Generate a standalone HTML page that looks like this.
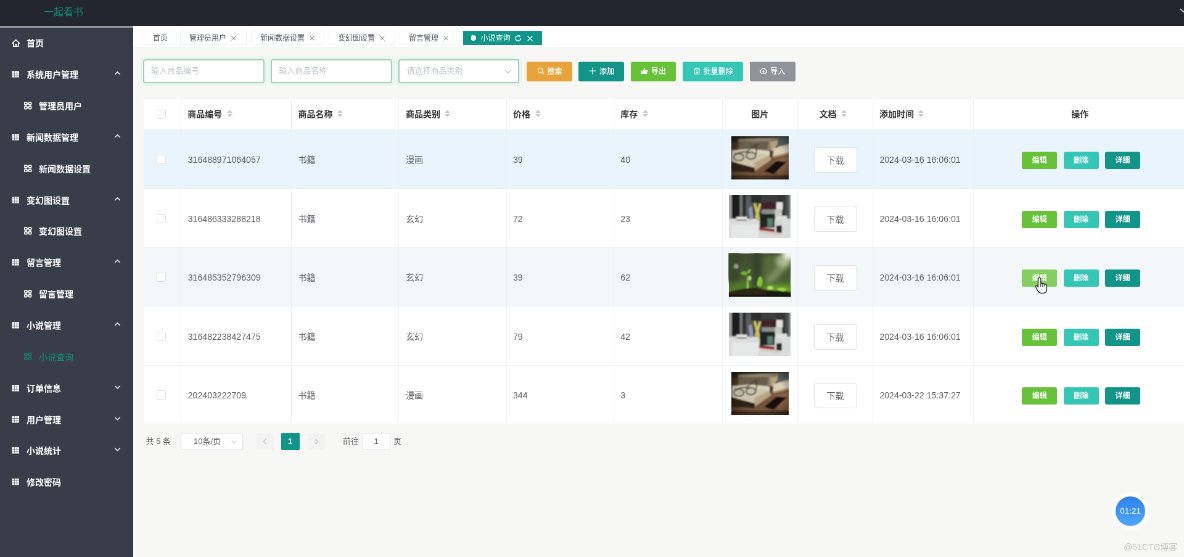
<!DOCTYPE html>
<html lang="zh-CN">
<head>
<meta charset="utf-8">
<title>一起看书</title>
<style>
*{box-sizing:border-box;margin:0;padding:0}
html,body{width:1184px;height:557px;overflow:hidden;background:#f7f7f6}
body{font-family:"Liberation Sans","Noto Sans CJK SC",sans-serif;color:#606266}
#app{position:absolute;left:0;top:0;width:1940px;height:904px;transform:scale(0.616667);transform-origin:0 0;overflow:hidden;background:#f7f7f6;font-size:14px;will-change:transform;filter:blur(0.6px)}
.abs{position:absolute}
/* header */
#hdr{left:0;top:0;width:1940px;height:42.4px;background:#23262e}
#hdr .title{left:71px;top:7.5px;font-size:16px;line-height:24px;color:#0f8f74;white-space:nowrap}
/* sidebar */
#side{left:0;top:42.4px;width:216px;height:870px;background:#393d49;border-top:3px solid #94979f}
#side .strip{left:209px;top:0;width:7px;height:870px;background:#363a45}
.mi{position:absolute;left:0;width:216px;height:51px;line-height:51px;color:#fff;font-size:14px;font-weight:700;white-space:nowrap}
.mi .ic{position:absolute;left:19px;top:18px;width:12.5px;height:12.5px}
.mi .tx{position:absolute;left:43px;top:0}
.mi.sub .ic{left:39px}
.mi.sub .tx{left:63px}
.mi .ar{position:absolute;left:184.5px;top:17px;width:11px;height:11px}
.mi.act{color:#12917c;font-weight:400}
/* tabs */
#tabs{left:216px;top:42.4px;width:1730px;height:35.8px;background:#fff;border-bottom:1px solid #eceeef}
.tab{position:absolute;top:7.3px;height:23.4px;line-height:23.4px;border:1px solid #eef0f3;background:#fff;color:#495060;font-size:12px;white-space:nowrap;text-align:left;padding-left:14px}
.tab .x{display:inline-block;margin-left:7px;width:10px;height:10px;vertical-align:-1px}
.tab.on{background:#0f9688;border-color:#0f9688;color:#fff}
/* search */
.inp{position:absolute;top:96px;height:39px;border:2px solid #a3d0bd;border-radius:4px;background:#fff;box-shadow:0 0 0 4px rgba(130,230,190,.12);font-size:13px;line-height:33px;color:#c3c6cd;padding-left:11px;white-space:nowrap}
.btn{position:absolute;top:100px;height:32px;border-radius:3px;color:#fff;font-size:12px;line-height:32px;text-align:center;white-space:nowrap;font-weight:500}
/* table */
#tbl{left:233px;top:160.6px;width:1707px;height:527.9px;background:#fff}
.row{position:absolute;left:0;width:1707px;height:95.5px;border-bottom:1px solid #ebeef5}
.hrow{position:absolute;left:0;top:0;width:1707px;height:50.4px;border-bottom:1px solid #ebeef5}
.vl{position:absolute;top:0;width:1px;height:527.9px;background:#eef0f5}
.c{position:absolute;white-space:nowrap;font-size:14.15px;line-height:20px;color:#606266}
.h{position:absolute;white-space:nowrap;font-size:14px;line-height:20px;color:#333;font-weight:700;top:14.2px}
.cb{position:absolute;left:20.5px;width:15px;height:15px;border:1px solid #dcdfe6;border-radius:2px;background:#fff}
.dl{position:absolute;left:1087px;top:28.4px;width:70px;height:41px;border:1px solid #dcdfe6;border-radius:4px;background:#fff;color:#606266;font-size:14px;line-height:40px;text-align:center}
.ob{position:absolute;top:35.2px;width:57px;height:28px;border-radius:3px;color:#fff;font-size:12px;line-height:28px;text-align:center;font-weight:700}
.img{position:absolute;overflow:hidden}
/* pagination */
.pg{position:absolute;font-size:13px;color:#606266;line-height:28px;white-space:nowrap}
</style>
</head>
<body>
<div id="app">
<div id="hdr" class="abs"><div class="title abs">一起看书</div>
<svg class="abs" style="left:1913px;top:13px" width="12" height="9" viewBox="0 0 14 10"><path d="M1 1 L7 7 L13 1" fill="none" stroke="#b9bbc0" stroke-width="2"/></svg>
</div>
<div id="side" class="abs"><div class="strip abs"></div>
<div class="mi" style="top:0.0px"><svg class="ic" style="width:13.5px;height:13.5px;top:17.5px;left:18.5px" viewBox="0 0 12 12"><path d="M0.8 6.3 L6 1.3 L11.2 6.3 M2.5 5.2 V10.9 H9.5 V5.2 M5 10.9 V8.2 H7 V10.9" fill="none" stroke="#fff" stroke-width="1.35" stroke-linejoin="round" stroke-linecap="round"/></svg><span class="tx">首页</span></div>
<div class="mi" style="top:50.8px"><svg class="ic" viewBox="0 0 12 12"><path d="M0.5 1h11v10h-11z M0.5 4.2h11 M0.5 7.6h11 M4.2 1v10 M7.8 1v10" fill="#fff" stroke="#393d49" stroke-width="0"/><path d="M0.5 4.3h11 M0.5 7.7h11 M4.2 1v10 M7.9 1v10" stroke="#393d49" stroke-width="0.55" fill="none"/></svg><span class="tx">系统用户管理</span><svg class="ar" viewBox="0 0 12 12"><path d="M1.5 8.5 L6 4 L10.5 8.5" fill="none" stroke="#fff" stroke-width="1.6"/></svg></div>
<div class="mi sub" style="top:101.7px"><svg class="ic" viewBox="0 0 12 12"><g fill="none" stroke="#fff" stroke-width="1.7"><rect x="0.8" y="0.8" width="4" height="4" rx="1.2"/><rect x="7.2" y="0.8" width="4" height="4" rx="1.2"/><rect x="0.8" y="7.2" width="4" height="4" rx="1.2"/><rect x="7.2" y="7.2" width="4" height="4" rx="1.2"/></g></svg><span class="tx">管理员用户</span></div>
<div class="mi" style="top:152.5px"><svg class="ic" viewBox="0 0 12 12"><path d="M0.5 1h11v10h-11z M0.5 4.2h11 M0.5 7.6h11 M4.2 1v10 M7.8 1v10" fill="#fff" stroke="#393d49" stroke-width="0"/><path d="M0.5 4.3h11 M0.5 7.7h11 M4.2 1v10 M7.9 1v10" stroke="#393d49" stroke-width="0.55" fill="none"/></svg><span class="tx">新闻数据管理</span><svg class="ar" viewBox="0 0 12 12"><path d="M1.5 8.5 L6 4 L10.5 8.5" fill="none" stroke="#fff" stroke-width="1.6"/></svg></div>
<div class="mi sub" style="top:203.4px"><svg class="ic" viewBox="0 0 12 12"><g fill="none" stroke="#fff" stroke-width="1.7"><rect x="0.8" y="0.8" width="4" height="4" rx="1.2"/><rect x="7.2" y="0.8" width="4" height="4" rx="1.2"/><rect x="0.8" y="7.2" width="4" height="4" rx="1.2"/><rect x="7.2" y="7.2" width="4" height="4" rx="1.2"/></g></svg><span class="tx">新闻数据设置</span></div>
<div class="mi" style="top:254.2px"><svg class="ic" viewBox="0 0 12 12"><path d="M0.5 1h11v10h-11z M0.5 4.2h11 M0.5 7.6h11 M4.2 1v10 M7.8 1v10" fill="#fff" stroke="#393d49" stroke-width="0"/><path d="M0.5 4.3h11 M0.5 7.7h11 M4.2 1v10 M7.9 1v10" stroke="#393d49" stroke-width="0.55" fill="none"/></svg><span class="tx">变幻图设置</span><svg class="ar" viewBox="0 0 12 12"><path d="M1.5 8.5 L6 4 L10.5 8.5" fill="none" stroke="#fff" stroke-width="1.6"/></svg></div>
<div class="mi sub" style="top:305.1px"><svg class="ic" viewBox="0 0 12 12"><g fill="none" stroke="#fff" stroke-width="1.7"><rect x="0.8" y="0.8" width="4" height="4" rx="1.2"/><rect x="7.2" y="0.8" width="4" height="4" rx="1.2"/><rect x="0.8" y="7.2" width="4" height="4" rx="1.2"/><rect x="7.2" y="7.2" width="4" height="4" rx="1.2"/></g></svg><span class="tx">变幻图设置</span></div>
<div class="mi" style="top:356.0px"><svg class="ic" viewBox="0 0 12 12"><path d="M0.5 1h11v10h-11z M0.5 4.2h11 M0.5 7.6h11 M4.2 1v10 M7.8 1v10" fill="#fff" stroke="#393d49" stroke-width="0"/><path d="M0.5 4.3h11 M0.5 7.7h11 M4.2 1v10 M7.9 1v10" stroke="#393d49" stroke-width="0.55" fill="none"/></svg><span class="tx">留言管理</span><svg class="ar" viewBox="0 0 12 12"><path d="M1.5 8.5 L6 4 L10.5 8.5" fill="none" stroke="#fff" stroke-width="1.6"/></svg></div>
<div class="mi sub" style="top:406.8px"><svg class="ic" viewBox="0 0 12 12"><g fill="none" stroke="#fff" stroke-width="1.7"><rect x="0.8" y="0.8" width="4" height="4" rx="1.2"/><rect x="7.2" y="0.8" width="4" height="4" rx="1.2"/><rect x="0.8" y="7.2" width="4" height="4" rx="1.2"/><rect x="7.2" y="7.2" width="4" height="4" rx="1.2"/></g></svg><span class="tx">留言管理</span></div>
<div class="mi" style="top:457.7px"><svg class="ic" viewBox="0 0 12 12"><path d="M0.5 1h11v10h-11z M0.5 4.2h11 M0.5 7.6h11 M4.2 1v10 M7.8 1v10" fill="#fff" stroke="#393d49" stroke-width="0"/><path d="M0.5 4.3h11 M0.5 7.7h11 M4.2 1v10 M7.9 1v10" stroke="#393d49" stroke-width="0.55" fill="none"/></svg><span class="tx">小说管理</span><svg class="ar" viewBox="0 0 12 12"><path d="M1.5 8.5 L6 4 L10.5 8.5" fill="none" stroke="#fff" stroke-width="1.6"/></svg></div>
<div class="mi sub act" style="top:508.5px"><svg class="ic" viewBox="0 0 12 12"><g fill="none" stroke="#12917c" stroke-width="1.2"><rect x="0.8" y="0.8" width="4" height="4" rx="1.2"/><rect x="7.2" y="0.8" width="4" height="4" rx="1.2"/><rect x="0.8" y="7.2" width="4" height="4" rx="1.2"/><rect x="7.2" y="7.2" width="4" height="4" rx="1.2"/></g></svg><span class="tx">小说查询</span></div>
<div class="mi" style="top:559.4px"><svg class="ic" viewBox="0 0 12 12"><path d="M0.5 1h11v10h-11z M0.5 4.2h11 M0.5 7.6h11 M4.2 1v10 M7.8 1v10" fill="#fff" stroke="#393d49" stroke-width="0"/><path d="M0.5 4.3h11 M0.5 7.7h11 M4.2 1v10 M7.9 1v10" stroke="#393d49" stroke-width="0.55" fill="none"/></svg><span class="tx">订单信息</span><svg class="ar" viewBox="0 0 12 12"><path d="M1.5 4 L6 8.5 L10.5 4" fill="none" stroke="#fff" stroke-width="1.6"/></svg></div>
<div class="mi" style="top:610.2px"><svg class="ic" viewBox="0 0 12 12"><path d="M0.5 1h11v10h-11z M0.5 4.2h11 M0.5 7.6h11 M4.2 1v10 M7.8 1v10" fill="#fff" stroke="#393d49" stroke-width="0"/><path d="M0.5 4.3h11 M0.5 7.7h11 M4.2 1v10 M7.9 1v10" stroke="#393d49" stroke-width="0.55" fill="none"/></svg><span class="tx">用户管理</span><svg class="ar" viewBox="0 0 12 12"><path d="M1.5 4 L6 8.5 L10.5 4" fill="none" stroke="#fff" stroke-width="1.6"/></svg></div>
<div class="mi" style="top:661.1px"><svg class="ic" viewBox="0 0 12 12"><path d="M0.5 1h11v10h-11z M0.5 4.2h11 M0.5 7.6h11 M4.2 1v10 M7.8 1v10" fill="#fff" stroke="#393d49" stroke-width="0"/><path d="M0.5 4.3h11 M0.5 7.7h11 M4.2 1v10 M7.9 1v10" stroke="#393d49" stroke-width="0.55" fill="none"/></svg><span class="tx">小说统计</span><svg class="ar" viewBox="0 0 12 12"><path d="M1.5 4 L6 8.5 L10.5 4" fill="none" stroke="#fff" stroke-width="1.6"/></svg></div>
<div class="mi" style="top:711.9px"><svg class="ic" viewBox="0 0 12 12"><path d="M0.5 1h11v10h-11z M0.5 4.2h11 M0.5 7.6h11 M4.2 1v10 M7.8 1v10" fill="#fff" stroke="#393d49" stroke-width="0"/><path d="M0.5 4.3h11 M0.5 7.7h11 M4.2 1v10 M7.9 1v10" stroke="#393d49" stroke-width="0.55" fill="none"/></svg><span class="tx">修改密码</span></div>
</div>
<div id="tabs" class="abs">
<div class="tab" style="left:16.7px;width:53.7px">首页</div>
<div class="tab" style="left:75.9px;width:107.8px">管理员用户<svg class="x" viewBox="0 0 10 10"><path d="M1.5 1.5 L8.5 8.5 M8.5 1.5 L1.5 8.5" stroke="#6a6f78" stroke-width="1" fill="none"/></svg></div>
<div class="tab" style="left:191.0px;width:118.9px">新闻数据设置<svg class="x" viewBox="0 0 10 10"><path d="M1.5 1.5 L8.5 8.5 M8.5 1.5 L1.5 8.5" stroke="#6a6f78" stroke-width="1" fill="none"/></svg></div>
<div class="tab" style="left:316.9px;width:108.0px">变幻图设置<svg class="x" viewBox="0 0 10 10"><path d="M1.5 1.5 L8.5 8.5 M8.5 1.5 L1.5 8.5" stroke="#6a6f78" stroke-width="1" fill="none"/></svg></div>
<div class="tab" style="left:432.0px;width:91.5px">留言管理<svg class="x" viewBox="0 0 10 10"><path d="M1.5 1.5 L8.5 8.5 M8.5 1.5 L1.5 8.5" stroke="#6a6f78" stroke-width="1" fill="none"/></svg></div>
<div class="tab on" style="left:534.5px;width:128.7px;padding-left:28px"><span style="position:absolute;left:11.5px;top:6.5px;width:9px;height:9px;border-radius:50%;background:#fff"></span>小说查询<svg style="position:absolute;left:82.5px;top:5px" width="12.5" height="12.5" viewBox="0 0 12 12"><path d="M10 6 A4 4 0 1 1 8.2 2.6" fill="none" stroke="#fff" stroke-width="1.4"/><path d="M7.2 0.8 L10.2 2.6 L7.4 4.4z" fill="#fff"/></svg><svg style="position:absolute;left:102.5px;top:6px" width="11" height="11" viewBox="0 0 10 10"><path d="M1.5 1.5 L8.5 8.5 M8.5 1.5 L1.5 8.5" stroke="#fff" stroke-width="1.3" fill="none"/></svg></div>
</div>
<div class="inp" style="left:231.9px;width:197.0px">输入商品编号</div>
<div class="inp" style="left:439.3px;width:197.2px">输入商品名称</div>
<div class="inp" style="left:646.4px;width:196.0px">请选择商品类别<svg style="position:absolute;right:9px;top:11px" width="14" height="14" viewBox="0 0 14 14"><path d="M2 4.5 L7 9.5 L12 4.5" fill="none" stroke="#c0c4cc" stroke-width="1.3"/></svg></div>
<div class="btn" style="left:854.1px;width:74.0px;background:#e8a33d"><svg width="12" height="12" viewBox="0 0 12 12" style="vertical-align:-1px;margin-right:5px"><circle cx="5.2" cy="5.2" r="3.8" fill="none" stroke="#fff" stroke-width="1.3"/><path d="M8 8 L11 11" stroke="#fff" stroke-width="1.3"/></svg>搜索</div>
<div class="btn" style="left:938.4px;width:74.0px;background:#139488"><svg width="12" height="12" viewBox="0 0 12 12" style="vertical-align:-1px;margin-right:5px"><path d="M6 0.5 V11.5 M0.5 6 H11.5" stroke="#fff" stroke-width="1.2"/></svg>添加</div>
<div class="btn" style="left:1022.8px;width:73.4px;background:#67c23a"><svg width="12" height="12" viewBox="0 0 12 12" style="vertical-align:-1px;margin-right:5px"><path d="M0.5 5.5h2.5v5.5h-2.5z M3.8 5.2 L5.8 1 Q7.6 1 7 3.2 L6.8 4.4 H10.4 Q11.8 4.6 11.2 6.2 L10 10.2 Q9.6 11 8.6 11 H3.8z" fill="#fff"/></svg>导出</div>
<div class="btn" style="left:1107.2px;width:98.0px;background:#36c6b5"><svg width="12" height="12" viewBox="0 0 12 12" style="vertical-align:-1px;margin-right:5px"><path d="M1 3 H11 M4 3 V1.2 H8 V3 M2.2 3 V11 H9.8 V3 M4.2 6h3.6 M4.2 8.4h3.6" fill="none" stroke="#fff" stroke-width="1.1"/></svg>批量删除</div>
<div class="btn" style="left:1215.7px;width:74.0px;background:#909399"><svg width="12" height="12" viewBox="0 0 12 12" style="vertical-align:-1px;margin-right:5px"><path d="M3.2 10 A3 3 0 0 1 2.6 4.4 A3.6 3.6 0 0 1 9.4 4.4 A3 3 0 0 1 8.8 10 Z" fill="none" stroke="#fff" stroke-width="1.3"/><path d="M6 9.2 V5.6 M4.4 7 L6 5.4 L7.6 7" fill="none" stroke="#fff" stroke-width="1.1"/></svg>导入</div>
<div id="tbl" class="abs">
<div class="hrow">
<div class="cb" style="top:17px"></div>
<div class="h" style="left:71.2px">商品编号<svg style="position:absolute;top:1.5px;margin-left:6.5px" width="11" height="16" viewBox="0 0 10 16" preserveAspectRatio="none"><path d="M5 2 L9 7 H1z M5 14 L9 9 H1z" fill="#c6cad2"/></svg></div>
<div class="h" style="left:250.4px">商品名称<svg style="position:absolute;top:1.5px;margin-left:6.5px" width="11" height="16" viewBox="0 0 10 16" preserveAspectRatio="none"><path d="M5 2 L9 7 H1z M5 14 L9 9 H1z" fill="#c6cad2"/></svg></div>
<div class="h" style="left:424.9px">商品类别<svg style="position:absolute;top:1.5px;margin-left:6.5px" width="11" height="16" viewBox="0 0 10 16" preserveAspectRatio="none"><path d="M5 2 L9 7 H1z M5 14 L9 9 H1z" fill="#c6cad2"/></svg></div>
<div class="h" style="left:599.0px">价格<svg style="position:absolute;top:1.5px;margin-left:6.5px" width="11" height="16" viewBox="0 0 10 16" preserveAspectRatio="none"><path d="M5 2 L9 7 H1z M5 14 L9 9 H1z" fill="#c6cad2"/></svg></div>
<div class="h" style="left:773.3px">库存<svg style="position:absolute;top:1.5px;margin-left:6.5px" width="11" height="16" viewBox="0 0 10 16" preserveAspectRatio="none"><path d="M5 2 L9 7 H1z M5 14 L9 9 H1z" fill="#c6cad2"/></svg></div>
<div class="h" style="left:938.3px;width:121.90000000000009px;text-align:center">图片</div>
<div class="h" style="left:1060.2px;width:121.70000000000005px;text-align:center;padding-right:23px">文档<svg style="position:absolute;top:1.5px;margin-left:6.5px" width="11" height="16" viewBox="0 0 10 16" preserveAspectRatio="none"><path d="M5 2 L9 7 H1z M5 14 L9 9 H1z" fill="#c6cad2"/></svg></div>
<div class="h" style="left:1192.9px">添加时间<svg style="position:absolute;top:1.5px;margin-left:6.5px" width="11" height="16" viewBox="0 0 10 16" preserveAspectRatio="none"><path d="M5 2 L9 7 H1z M5 14 L9 9 H1z" fill="#c6cad2"/></svg></div>
<div class="h" style="left:1344.8px;width:347.10000000000014px;text-align:center">操作</div>
</div>
<div class="row" style="top:50.4px;background:#e9f4fd">
<div class="cb" style="top:40.5px"></div>
<div class="c" style="left:71.7px;top:38.4px">316488971064057</div>
<div class="c" style="left:250.4px;top:38.4px">书籍</div>
<div class="c" style="left:424.9px;top:38.4px">漫画</div>
<div class="c" style="left:599.0px;top:38.4px">39</div>
<div class="c" style="left:773.3px;top:38.4px">40</div>
<svg class="img" style="left:952.6px;top:9.6px" width="93.6" height="70.2" viewBox="35 40 643 482" preserveAspectRatio="none">
<defs>
<filter id="bA0" x="-5%" y="-5%" width="110%" height="110%"><feGaussianBlur stdDeviation="7"/></filter>
<radialGradient id="vA0" cx="0.5" cy="0.5" r="0.75"><stop offset="0.55" stop-color="#000" stop-opacity="0"/><stop offset="1" stop-color="#000" stop-opacity=".62"/></radialGradient>
<clipPath id="cA0"><rect x="35" y="40" width="643" height="482"/></clipPath>
</defs>
<g clip-path="url(#cA0)">
<rect x="35" y="40" width="643" height="482" fill="#4b3826"/>
<g filter="url(#bA0)">
<rect x="20" y="30" width="680" height="70" fill="#33271b"/>
<path d="M300 330 L470 240 L700 200 L700 540 L20 540 L20 440 L290 440z" fill="#75523a"/>
<path d="M520 300 L700 260 L700 470 L560 500z" fill="#8a6045"/>
<path d="M110 70 L600 52 L470 200 L120 185z" fill="#8f846e"/>
<path d="M120 100 L450 95 L440 190 L110 185z" fill="#6a5f4d"/>
<path d="M470 110 L610 55 L520 170 L480 215z" fill="#b7a37f"/>
<path d="M560 45 L700 40 L700 130 L545 165z" fill="#5b6867"/>
<path d="M500 175 L700 120 L700 215 L500 268z" fill="#d8cfb6"/>
<path d="M500 262 L700 210 L700 232 L505 282z" fill="#a48a68"/>
<path d="M40 195 L250 180 L462 205 L472 285 L290 395 L40 320z" fill="#cdc4ac"/>
<path d="M250 185 L460 205 L468 250 L330 225z" fill="#ddd5bf"/>
<path d="M290 335 L472 245 L474 305 L300 425z" fill="#b8a582"/>
<path d="M462 190 Q500 215 478 275 L462 270z" fill="#3c2c1e"/>
<path d="M30 320 L292 390 L292 445 L30 420z" fill="#2e2217"/>
<path d="M400 430 L540 315 L652 326 L505 462z" fill="#120e0b"/>
<rect x="20" y="475" width="680" height="60" fill="#4a3423"/>
<ellipse cx="118" cy="272" rx="52" ry="38" fill="#bfbaa6"/>
<ellipse cx="252" cy="256" rx="50" ry="36" fill="#c6c1ae"/>
</g>
<g fill="none" stroke="#3a342a" stroke-width="10" filter="url(#bA0)" opacity=".9">
<ellipse cx="118" cy="272" rx="56" ry="40"/>
<ellipse cx="252" cy="256" rx="54" ry="38"/>
<path d="M70 240 Q150 205 235 215 M305 250 Q330 180 300 130 M200 225 Q260 140 340 130"/>
</g>
<rect x="35" y="40" width="643" height="482" fill="url(#vA0)"/>
</g>
</svg>

<div class="dl" style="left:1086.5px">下载</div>
<div class="c" style="left:1193.4px;top:38.4px">2024-03-16 16:06:01</div>
<div class="ob" style="left:1424.3px;background:#67c23a">编辑</div>
<div class="ob" style="left:1491.6px;background:#36c6b5">删除</div>
<div class="ob" style="left:1558.9px;background:#139488">详细</div>
</div>
<div class="row" style="top:145.9px;background:#fff">
<div class="cb" style="top:40.5px"></div>
<div class="c" style="left:71.7px;top:38.4px">316486333288218</div>
<div class="c" style="left:250.4px;top:38.4px">书籍</div>
<div class="c" style="left:424.9px;top:38.4px">玄幻</div>
<div class="c" style="left:599.0px;top:38.4px">72</div>
<div class="c" style="left:773.3px;top:38.4px">23</div>
<svg class="img" style="left:949.3px;top:9.1px" width="100.2" height="70.2" viewBox="12 38 688 482" preserveAspectRatio="none">
<defs>
<filter id="bB1" x="-5%" y="-5%" width="110%" height="110%"><feGaussianBlur stdDeviation="6"/></filter>
<clipPath id="cB1"><rect x="12" y="38" width="688" height="482"/></clipPath>
</defs>
<g clip-path="url(#cB1)">
<rect x="12" y="38" width="688" height="482" fill="#dcdfde"/>
<g filter="url(#bB1)">
<rect x="0" y="20" width="720" height="285" fill="#4d4e50"/>
<rect x="0" y="20" width="45" height="290" fill="#a2a3a4"/>
<rect x="45" y="20" width="88" height="275" fill="#1b1c1e"/>
<rect x="133" y="20" width="30" height="280" fill="#737475"/>
<rect x="163" y="20" width="40" height="270" fill="#2e2f31"/>
<rect x="203" y="60" width="55" height="240" fill="#5a5b5d"/>
<rect x="258" y="20" width="115" height="110" fill="#2c2d2f"/>
<rect x="373" y="20" width="170" height="100" fill="#3b3c3e"/>
<rect x="545" y="20" width="95" height="260" fill="#343537"/>
<rect x="640" y="20" width="40" height="280" fill="#4a4b4d"/>
<rect x="680" y="20" width="30" height="290" fill="#8b8c8d"/>
<rect x="0" y="305" width="720" height="230" fill="#d9dcdb"/>
<rect x="40" y="370" width="300" height="160" fill="#e6e8e7"/>
<rect x="95" y="282" width="118" height="30" fill="#ebebe9"/>
<rect x="98" y="312" width="112" height="16" fill="#6c6460"/>
<rect x="100" y="328" width="112" height="38" fill="#e0e0de"/>
<path d="M232 190 L266 160 L286 300 L246 318z" fill="#9298ae"/>
<path d="M284 132 L312 130 L366 322 L336 330z" fill="#c9c052"/>
<path d="M348 135 L372 140 L326 300 L300 296z" fill="#cfc862"/>
<rect x="372" y="118" width="170" height="84" fill="#40222a"/>
<rect x="380" y="200" width="150" height="52" fill="#8a8f8f"/>
<rect x="355" y="250" width="168" height="152" fill="#1b2521"/>
<rect x="440" y="300" width="62" height="92" fill="#5d7b72"/>
<rect x="540" y="120" width="72" height="82" fill="#e3e3e1"/>
<rect x="525" y="200" width="78" height="75" fill="#c6c8c6"/>
<rect x="530" y="272" width="130" height="58" fill="#dfe0de"/>
<rect x="522" y="330" width="72" height="60" fill="#d2d4d2"/>
<path d="M350 398 L522 418 L522 452 L350 432z" fill="#8c2d2b"/>
<path d="M356 434 L585 462 L580 492 L360 462z" fill="#d8c7be"/>
<path d="M540 382 L602 378 L600 462 L540 456z" fill="#29292a"/>
</g>
</g>
</svg>

<div class="dl" style="left:1086.5px">下载</div>
<div class="c" style="left:1193.4px;top:38.4px">2024-03-16 16:06:01</div>
<div class="ob" style="left:1424.3px;background:#67c23a">编辑</div>
<div class="ob" style="left:1491.6px;background:#36c6b5">删除</div>
<div class="ob" style="left:1558.9px;background:#139488">详细</div>
</div>
<div class="row" style="top:241.4px;background:#f4f7f9">
<div class="cb" style="top:40.5px"></div>
<div class="c" style="left:71.7px;top:38.4px">316485352796309</div>
<div class="c" style="left:250.4px;top:38.4px">书籍</div>
<div class="c" style="left:424.9px;top:38.4px">玄幻</div>
<div class="c" style="left:599.0px;top:38.4px">39</div>
<div class="c" style="left:773.3px;top:38.4px">62</div>
<svg class="img" style="left:949.3px;top:9.1px" width="100.2" height="70.2" viewBox="12 38 688 482" preserveAspectRatio="none">
<defs>
<filter id="bC2" x="-5%" y="-5%" width="110%" height="110%"><feGaussianBlur stdDeviation="9"/></filter>
<filter id="bD2" x="-20%" y="-20%" width="140%" height="140%"><feGaussianBlur stdDeviation="22"/></filter>
<linearGradient id="gC2" x1="0" y1="0" x2="0" y2="1"><stop offset="0" stop-color="#3f4c2d"/><stop offset=".55" stop-color="#485c32"/><stop offset=".85" stop-color="#55782c"/><stop offset="1" stop-color="#3f5a22"/></linearGradient>
<clipPath id="cC2"><rect x="12" y="38" width="688" height="482"/></clipPath>
</defs>
<g clip-path="url(#cC2)">
<rect x="12" y="38" width="688" height="482" fill="url(#gC2)"/>
<g filter="url(#bD2)">
<rect x="0" y="20" width="130" height="330" fill="#3b482b"/>
<rect x="275" y="20" width="90" height="400" fill="#38432d"/>
<rect x="400" y="60" width="160" height="300" fill="#566a3c"/>
<path d="M700 20 L720 160 L470 380 L420 340z" fill="#98aa78" opacity=".6"/>
<circle cx="672" cy="48" r="66" fill="#f6f7ea"/>
<circle cx="610" cy="120" r="70" fill="#cdd7ae" opacity=".7"/>
<rect x="80" y="370" width="170" height="80" fill="#4f7c2a"/>
<rect x="410" y="395" width="300" height="80" fill="#6fa432"/>
</g>
<g filter="url(#bC2)">
<circle cx="92" cy="182" r="28" fill="#939a80"/>
<path d="M210 430 L214 290 L228 290 L232 430z" fill="#a6cf5e"/>
<path d="M140 262 Q170 210 222 258 Q200 305 140 262z" fill="#74b430"/>
<path d="M212 262 Q222 205 256 215 Q252 265 212 262z" fill="#80c038"/>
<ellipse cx="246" cy="312" rx="16" ry="26" fill="#bfe08e"/>
<path d="M325 400 Q318 310 362 288 Q410 330 372 412z" fill="#82c636"/>
<ellipse cx="472" cy="420" rx="34" ry="20" fill="#b9e262"/>
<ellipse cx="600" cy="438" rx="50" ry="18" fill="#a0d848"/>
<path d="M0 470 Q100 446 190 432 Q290 404 400 440 Q560 466 720 472 L720 540 L0 540z" fill="#2b2519"/>
<path d="M420 470 Q470 440 520 462 Q570 440 610 466 Q650 452 690 480 L690 510 L420 510z" fill="#191b10"/>
<rect x="0" y="498" width="720" height="40" fill="#17150d"/>
</g>
</g>
</svg>

<div class="dl" style="left:1086.5px">下载</div>
<div class="c" style="left:1193.4px;top:38.4px">2024-03-16 16:06:01</div>
<div class="ob" style="left:1424.3px;background:#85ce61">编辑</div>
<div class="ob" style="left:1491.6px;background:#36c6b5">删除</div>
<div class="ob" style="left:1558.9px;background:#139488">详细</div>
</div>
<div class="row" style="top:336.9px;background:#fff">
<div class="cb" style="top:40.5px"></div>
<div class="c" style="left:71.7px;top:38.4px">316482238427475</div>
<div class="c" style="left:250.4px;top:38.4px">书籍</div>
<div class="c" style="left:424.9px;top:38.4px">玄幻</div>
<div class="c" style="left:599.0px;top:38.4px">79</div>
<div class="c" style="left:773.3px;top:38.4px">42</div>
<svg class="img" style="left:949.3px;top:9.1px" width="100.2" height="70.2" viewBox="12 38 688 482" preserveAspectRatio="none">
<defs>
<filter id="bB3" x="-5%" y="-5%" width="110%" height="110%"><feGaussianBlur stdDeviation="6"/></filter>
<clipPath id="cB3"><rect x="12" y="38" width="688" height="482"/></clipPath>
</defs>
<g clip-path="url(#cB3)">
<rect x="12" y="38" width="688" height="482" fill="#dcdfde"/>
<g filter="url(#bB3)">
<rect x="0" y="20" width="720" height="285" fill="#4d4e50"/>
<rect x="0" y="20" width="45" height="290" fill="#a2a3a4"/>
<rect x="45" y="20" width="88" height="275" fill="#1b1c1e"/>
<rect x="133" y="20" width="30" height="280" fill="#737475"/>
<rect x="163" y="20" width="40" height="270" fill="#2e2f31"/>
<rect x="203" y="60" width="55" height="240" fill="#5a5b5d"/>
<rect x="258" y="20" width="115" height="110" fill="#2c2d2f"/>
<rect x="373" y="20" width="170" height="100" fill="#3b3c3e"/>
<rect x="545" y="20" width="95" height="260" fill="#343537"/>
<rect x="640" y="20" width="40" height="280" fill="#4a4b4d"/>
<rect x="680" y="20" width="30" height="290" fill="#8b8c8d"/>
<rect x="0" y="305" width="720" height="230" fill="#d9dcdb"/>
<rect x="40" y="370" width="300" height="160" fill="#e6e8e7"/>
<rect x="95" y="282" width="118" height="30" fill="#ebebe9"/>
<rect x="98" y="312" width="112" height="16" fill="#6c6460"/>
<rect x="100" y="328" width="112" height="38" fill="#e0e0de"/>
<path d="M232 190 L266 160 L286 300 L246 318z" fill="#9298ae"/>
<path d="M284 132 L312 130 L366 322 L336 330z" fill="#c9c052"/>
<path d="M348 135 L372 140 L326 300 L300 296z" fill="#cfc862"/>
<rect x="372" y="118" width="170" height="84" fill="#40222a"/>
<rect x="380" y="200" width="150" height="52" fill="#8a8f8f"/>
<rect x="355" y="250" width="168" height="152" fill="#1b2521"/>
<rect x="440" y="300" width="62" height="92" fill="#5d7b72"/>
<rect x="540" y="120" width="72" height="82" fill="#e3e3e1"/>
<rect x="525" y="200" width="78" height="75" fill="#c6c8c6"/>
<rect x="530" y="272" width="130" height="58" fill="#dfe0de"/>
<rect x="522" y="330" width="72" height="60" fill="#d2d4d2"/>
<path d="M350 398 L522 418 L522 452 L350 432z" fill="#8c2d2b"/>
<path d="M356 434 L585 462 L580 492 L360 462z" fill="#d8c7be"/>
<path d="M540 382 L602 378 L600 462 L540 456z" fill="#29292a"/>
</g>
</g>
</svg>

<div class="dl" style="left:1086.5px">下载</div>
<div class="c" style="left:1193.4px;top:38.4px">2024-03-16 16:06:01</div>
<div class="ob" style="left:1424.3px;background:#67c23a">编辑</div>
<div class="ob" style="left:1491.6px;background:#36c6b5">删除</div>
<div class="ob" style="left:1558.9px;background:#139488">详细</div>
</div>
<div class="row" style="top:432.4px;background:#fff">
<div class="cb" style="top:40.5px"></div>
<div class="c" style="left:71.7px;top:38.4px">202403222709</div>
<div class="c" style="left:250.4px;top:38.4px">书籍</div>
<div class="c" style="left:424.9px;top:38.4px">漫画</div>
<div class="c" style="left:599.0px;top:38.4px">344</div>
<div class="c" style="left:773.3px;top:38.4px">3</div>
<svg class="img" style="left:952.6px;top:9.6px" width="93.6" height="70.2" viewBox="35 40 643 482" preserveAspectRatio="none">
<defs>
<filter id="bA4" x="-5%" y="-5%" width="110%" height="110%"><feGaussianBlur stdDeviation="7"/></filter>
<radialGradient id="vA4" cx="0.5" cy="0.5" r="0.75"><stop offset="0.55" stop-color="#000" stop-opacity="0"/><stop offset="1" stop-color="#000" stop-opacity=".62"/></radialGradient>
<clipPath id="cA4"><rect x="35" y="40" width="643" height="482"/></clipPath>
</defs>
<g clip-path="url(#cA4)">
<rect x="35" y="40" width="643" height="482" fill="#4b3826"/>
<g filter="url(#bA4)">
<rect x="20" y="30" width="680" height="70" fill="#33271b"/>
<path d="M300 330 L470 240 L700 200 L700 540 L20 540 L20 440 L290 440z" fill="#75523a"/>
<path d="M520 300 L700 260 L700 470 L560 500z" fill="#8a6045"/>
<path d="M110 70 L600 52 L470 200 L120 185z" fill="#8f846e"/>
<path d="M120 100 L450 95 L440 190 L110 185z" fill="#6a5f4d"/>
<path d="M470 110 L610 55 L520 170 L480 215z" fill="#b7a37f"/>
<path d="M560 45 L700 40 L700 130 L545 165z" fill="#5b6867"/>
<path d="M500 175 L700 120 L700 215 L500 268z" fill="#d8cfb6"/>
<path d="M500 262 L700 210 L700 232 L505 282z" fill="#a48a68"/>
<path d="M40 195 L250 180 L462 205 L472 285 L290 395 L40 320z" fill="#cdc4ac"/>
<path d="M250 185 L460 205 L468 250 L330 225z" fill="#ddd5bf"/>
<path d="M290 335 L472 245 L474 305 L300 425z" fill="#b8a582"/>
<path d="M462 190 Q500 215 478 275 L462 270z" fill="#3c2c1e"/>
<path d="M30 320 L292 390 L292 445 L30 420z" fill="#2e2217"/>
<path d="M400 430 L540 315 L652 326 L505 462z" fill="#120e0b"/>
<rect x="20" y="475" width="680" height="60" fill="#4a3423"/>
<ellipse cx="118" cy="272" rx="52" ry="38" fill="#bfbaa6"/>
<ellipse cx="252" cy="256" rx="50" ry="36" fill="#c6c1ae"/>
</g>
<g fill="none" stroke="#3a342a" stroke-width="10" filter="url(#bA4)" opacity=".9">
<ellipse cx="118" cy="272" rx="56" ry="40"/>
<ellipse cx="252" cy="256" rx="54" ry="38"/>
<path d="M70 240 Q150 205 235 215 M305 250 Q330 180 300 130 M200 225 Q260 140 340 130"/>
</g>
<rect x="35" y="40" width="643" height="482" fill="url(#vA4)"/>
</g>
</svg>

<div class="dl" style="left:1086.5px">下载</div>
<div class="c" style="left:1193.4px;top:38.4px">2024-03-22 15:37:27</div>
<div class="ob" style="left:1424.3px;background:#67c23a">编辑</div>
<div class="ob" style="left:1491.6px;background:#36c6b5">删除</div>
<div class="ob" style="left:1558.9px;background:#139488">详细</div>
</div>
<div class="vl" style="left:59.7px"></div>
<div class="vl" style="left:238.9px"></div>
<div class="vl" style="left:413.4px"></div>
<div class="vl" style="left:587.5px"></div>
<div class="vl" style="left:761.8px"></div>
<div class="vl" style="left:938.3px"></div>
<div class="vl" style="left:1060.2px"></div>
<div class="vl" style="left:1181.9px"></div>
<div class="vl" style="left:1344.8px"></div>
</div>
<div class="pg" style="left:236.6px;top:702px">共 5 条</div>
<div class="pg" style="left:293px;top:702px;width:101px;height:28px;border:1px solid #dcdfe6;border-radius:3px;background:#fff;line-height:26px;padding-left:20px">10条/页<svg style="position:absolute;right:8px;top:8px" width="11" height="11" viewBox="0 0 12 12"><path d="M2 4 L6 8 L10 4" fill="none" stroke="#c0c4cc" stroke-width="1.2"/></svg></div>
<div class="pg" style="left:416px;top:702px;width:28px;height:28px;border-radius:2px;background:#f3f3f4"><svg style="position:absolute;left:8px;top:8px" width="12" height="12" viewBox="0 0 12 12"><path d="M7.5 2 L3.5 6 L7.5 10" fill="none" stroke="#c0c4cc" stroke-width="1.3"/></svg></div>
<div class="pg" style="left:455.7px;top:702px;width:30px;height:28px;border-radius:2px;background:#0f9688;color:#fff;font-weight:700;text-align:center">1</div>
<div class="pg" style="left:499px;top:702px;width:28px;height:28px;border-radius:2px;background:#f3f3f4"><svg style="position:absolute;left:8px;top:8px" width="12" height="12" viewBox="0 0 12 12"><path d="M4.5 2 L8.5 6 L4.5 10" fill="none" stroke="#c0c4cc" stroke-width="1.3"/></svg></div>
<div class="pg" style="left:555.9px;top:702px">前往</div>
<div class="pg" style="left:587.7px;top:702px;width:45px;height:28px;border:1px solid #dcdfe6;border-radius:3px;background:#fff;line-height:26px;text-align:center">1</div>
<div class="pg" style="left:638px;top:702px">页</div>
<div class="abs" style="left:1806.1px;top:802.3px;width:54px;height:54px;border-radius:50%;background:#fff;box-shadow:0 0 5px 3px rgba(255,255,255,.85)"></div>
<div class="abs" style="left:1809.1px;top:805.3px;width:48px;height:48px;border-radius:50%;background:linear-gradient(#2f80ea,#4fa8fc);color:#fff;font-size:13.5px;line-height:48px;text-align:center">01:21</div>
<div class="abs" style="left:1822.2px;top:876.5px;font-size:14px;line-height:20px;color:#c9c9c9;white-space:nowrap">@51CTO博客</div>
<svg class="abs" style="left:1677.6px;top:449.2px" width="22" height="28" viewBox="0 0 22 28"><path d="M7 1.5 Q9.5 1 9.8 3.5 V11 Q12 9.6 13 11.4 Q15 10.2 16.2 12.2 Q19 11.4 19.4 14.4 V20 Q19.4 25.5 14.5 26.4 H10 Q6.5 26 4.8 22.5 L1.6 16.4 Q1.2 14 3.8 14.4 L5.4 16.4 V3.5 Q5.4 1.8 7 1.5z" fill="#fff" stroke="#222" stroke-width="1.4" stroke-linejoin="round"/><path d="M9.8 11v5 M13 11.6v4.6 M16.2 12.6v4" stroke="#222" stroke-width="1.2"/></svg>
</div>
</body>
</html>
